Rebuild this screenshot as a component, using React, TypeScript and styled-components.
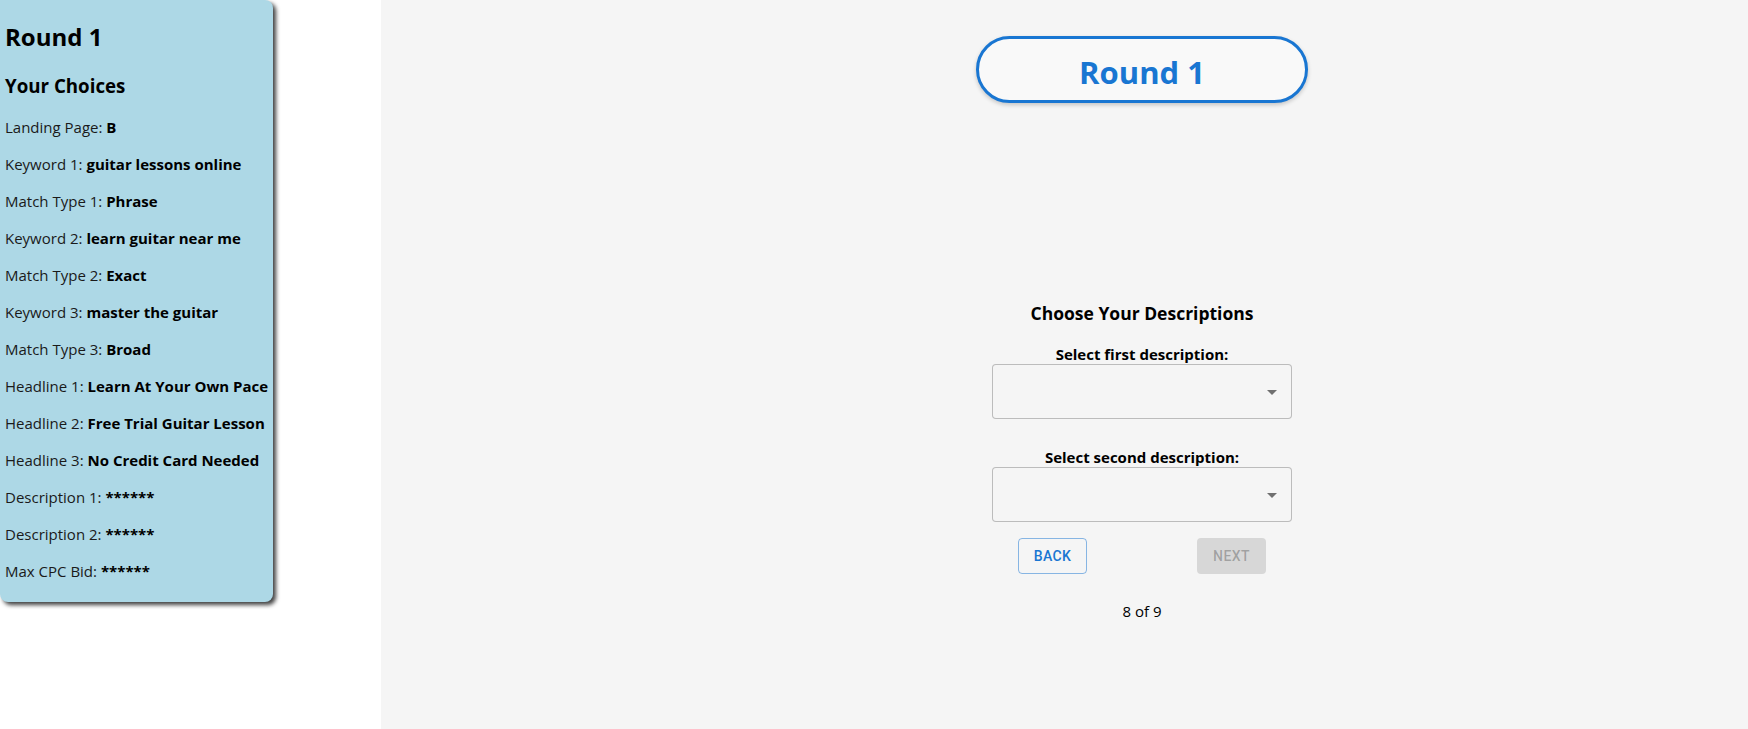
import React from "react";
import styled, { createGlobalStyle } from "styled-components";

const GlobalStyle = createGlobalStyle`
  html, body {
    margin: 0;
    padding: 0;
    background: #fff;
  }
  body {
    font-family: "Open Sans", "Noto Sans", sans-serif;
    color: #000;
  }
`;

const Page = styled.div`
  display: grid;
  grid-template-columns: 381px 1fr;
  height: 729px;
  overflow: hidden;
`;

const Side = styled.aside`
  background: #fff;
`;

const ChoicesCard = styled.div`
  width: 273px;
  box-sizing: border-box;
  padding: 1px 5px 4px;
  background: #add8e6;
  border-radius: 0 8px 8px 8px;
  box-shadow: 3px 3px 4px rgba(0, 0, 0, 0.75);
  white-space: nowrap;

  h2 {
    font-size: 24px;
    line-height: 32px;
    font-weight: 700;
    margin: 20px 0;
  }

  h3 {
    font-size: 18.72px;
    line-height: 25px;
    font-weight: 700;
    margin: 20px 0 18.72px;
  }
`;

const Choice = styled.p`
  font-size: 15px;
  line-height: 21px;
  margin: 16px 0;
  font-weight: 400;
  color: #1a1a1a;

  b {
    font-weight: 700;
    color: #000;
  }
`;

const Main = styled.main`
  background: #f5f5f5;
  display: flex;
  flex-direction: column;
  align-items: center;
  padding: 36px 0 0 155px;
`;

const RoundPill = styled.div`
  width: 332px;
  height: 67px;
  box-sizing: border-box;
  padding-top: 4px;
  border: 3px solid #1976d2;
  border-radius: 34px;
  background: #f9f9f9;
  box-shadow: 0 2px 4px rgba(0, 0, 0, 0.2);
  display: flex;
  align-items: center;
  justify-content: center;
  color: #1976d2;
  font-size: 31px;
  font-weight: 700;
`;

const Step = styled.section`
  margin-top: 198px;
  display: flex;
  flex-direction: column;
  align-items: center;
  width: 300px;

  h3 {
    margin: 0 0 19px;
    font-size: 17.5px;
    line-height: 25px;
    font-weight: 700;
  }
`;

const FieldLabel = styled.label<{ $gap?: number }>`
  display: block;
  margin-top: ${(p) => p.$gap ?? 0}px;
  font-size: 15px;
  line-height: 19px;
  font-weight: 700;
`;

const SelectBox = styled.div`
  position: relative;
  width: 300px;
  height: 55px;
  box-sizing: border-box;
  border: 1px solid rgba(0, 0, 0, 0.23);
  border-radius: 4px;
  background: #f5f5f5;

  svg {
    position: absolute;
    right: 7px;
    top: calc(50% - 12px);
    width: 24px;
    height: 24px;
    fill: rgba(0, 0, 0, 0.54);
  }
`;

const ButtonRow = styled.div`
  width: 248px;
  margin-top: 16px;
  display: flex;
  justify-content: space-between;
`;

const Button = styled.button<{ $variant: "outlined" | "disabled" }>`
  min-width: 64px;
  width: 69px;
  height: 36px;
  box-sizing: border-box;
  border-radius: 4px;
  font-family: Roboto, "Liberation Sans", sans-serif;
  font-weight: 500;
  font-size: 14px;
  letter-spacing: 0.4px;
  text-transform: uppercase;
  padding: 0;
  cursor: ${(p) => (p.$variant === "disabled" ? "default" : "pointer")};
  border: ${(p) =>
    p.$variant === "outlined" ? "1px solid rgba(25, 118, 210, 0.5)" : "none"};
  background: ${(p) => (p.$variant === "outlined" ? "transparent" : "rgba(0, 0, 0, 0.12)")};
  color: ${(p) => (p.$variant === "outlined" ? "#1976d2" : "rgba(0, 0, 0, 0.26)")};
`;

const Progress = styled.div`
  margin-top: 27px;
  font-size: 15px;
  line-height: 21px;
`;

const choices: [string, string][] = [
  ["Landing Page", "B"],
  ["Keyword 1", "guitar lessons online"],
  ["Match Type 1", "Phrase"],
  ["Keyword 2", "learn guitar near me"],
  ["Match Type 2", "Exact"],
  ["Keyword 3", "master the guitar"],
  ["Match Type 3", "Broad"],
  ["Headline 1", "Learn At Your Own Pace"],
  ["Headline 2", "Free Trial Guitar Lesson"],
  ["Headline 3", "No Credit Card Needed"],
  ["Description 1", "******"],
  ["Description 2", "******"],
  ["Max CPC Bid", "******"],
];

const Select = () => (
  <SelectBox>
    <svg viewBox="0 0 24 24">
      <path d="M7 10l5 5 5-5z" />
    </svg>
  </SelectBox>
);

export default function App() {
  return (
    <>
      <GlobalStyle />
      <Page>
        <Side>
          <ChoicesCard>
            <h2>Round 1</h2>
            <h3>Your Choices</h3>
            {choices.map(([label, value]) => (
              <Choice key={label}>
                {label}: <b>{value}</b>
              </Choice>
            ))}
          </ChoicesCard>
        </Side>
        <Main>
          <RoundPill>Round 1</RoundPill>
          <Step>
            <h3>Choose Your Descriptions</h3>
            <FieldLabel>Select first description:</FieldLabel>
            <Select />
            <FieldLabel $gap={29}>Select second description:</FieldLabel>
            <Select />
            <ButtonRow>
              <Button $variant="outlined">Back</Button>
              <Button $variant="disabled" disabled>
                Next
              </Button>
            </ButtonRow>
            <Progress>8 of 9</Progress>
          </Step>
        </Main>
      </Page>
    </>
  );
}
